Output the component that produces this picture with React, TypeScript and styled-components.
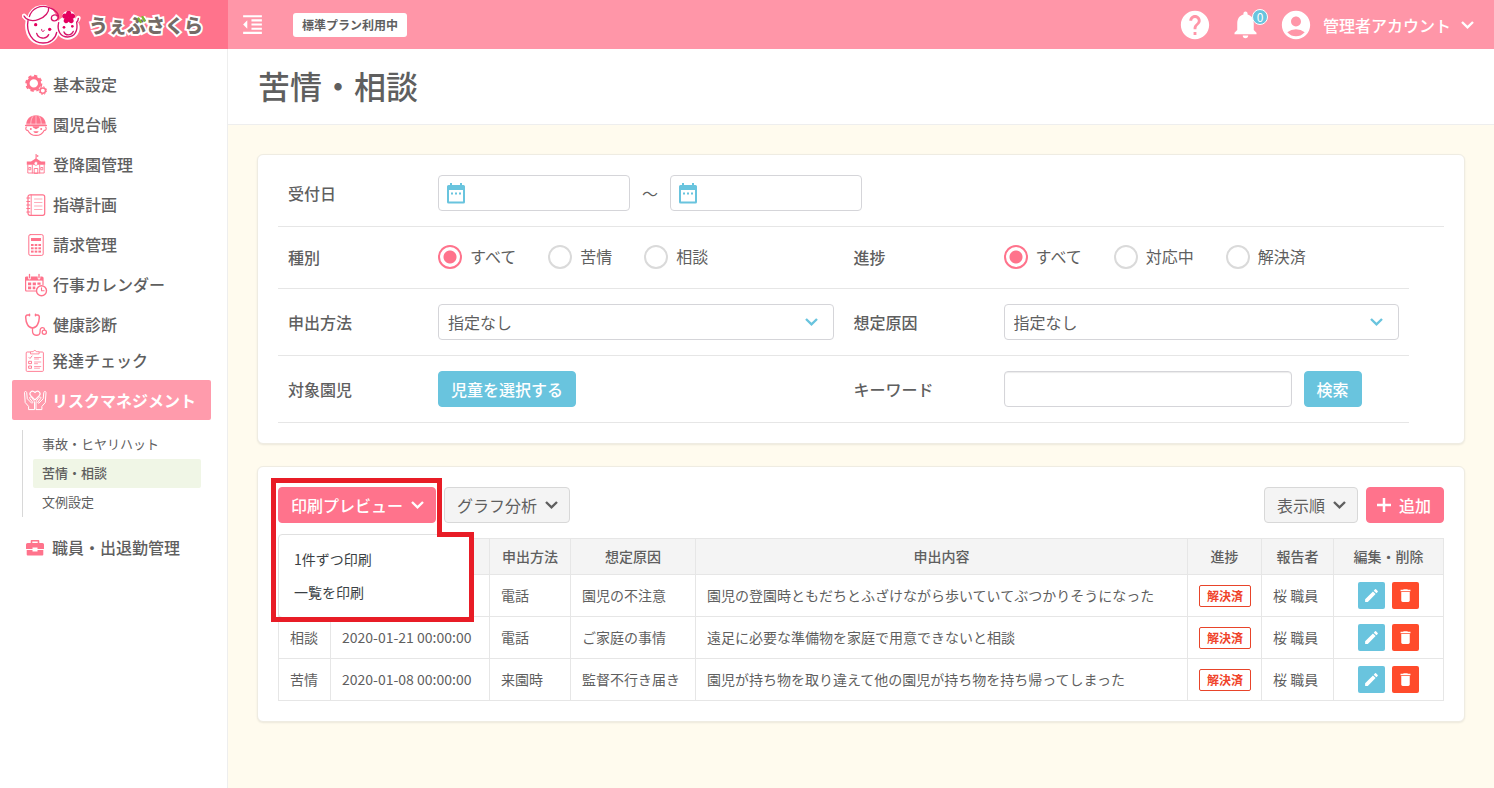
import React from "react";
import styled, { createGlobalStyle, css } from "styled-components";
import {
  MdAccountCircle,
  MdCreate,
  MdDelete,
  MdFormatIndentDecrease,
  MdHelp,
  MdNotifications,
} from "react-icons/md";

const color = {
  pink: "#ff738c",
  pinkLight: "#ff96a8",
  pinkActive: "#ff9bac",
  blue: "#69c4de",
  red: "#ff4b2b",
  text: "#5f5f5f",
  line: "#e6e6e6",
  field: "#d5d5d9",
  cream: "#fffbee",
  gray: "#f4f4f4",
};

const GlobalStyle = createGlobalStyle`
  *, *::before, *::after { box-sizing: border-box; }
  body {
    margin: 0;
    background: ${color.cream};
    color: ${color.text};
    font-family: "Noto Sans CJK JP", "Noto Sans", sans-serif;
    font-size: 16px;
    line-height: 24px;
  }
  button, input, select { font: inherit; color: inherit; margin: 0; }
  button { cursor: pointer; }
  a { color: inherit; text-decoration: none; }
  ul { list-style: none; margin: 0; padding: 0; }
  svg { display: block; flex: none; }
`;

/* ---------- page frame ---------- */

const Page = styled.div`
  display: grid;
  grid-template-columns: 228px minmax(0, 1fr);
  grid-template-rows: 49px auto;
  min-height: 100vh;
`;

const Brand = styled.a`
  display: flex;
  align-items: center;
  gap: 7px;
  padding-left: 22px;
  background: ${color.pink};
`;

const BrandName = styled.span`
  position: relative;
  color: #756b66;
  font-size: 19px;
  font-weight: 900;
  line-height: 24px;
  -webkit-text-stroke: 4px #fff;
  paint-order: stroke fill;
`;

const BrandLeaf = styled.svg`
  position: absolute;
  left: 48px;
  top: 3px;
`;

const TopBar = styled.header`
  display: flex;
  align-items: center;
  justify-content: space-between;
  padding: 0 20px 0 12px;
  background: ${color.pinkLight};
  color: #fff;
`;

const TopGroup = styled.div<{ $gap: number }>`
  display: flex;
  align-items: center;
  gap: ${(p) => p.$gap}px;
`;

const IconButton = styled.button`
  position: relative;
  display: flex;
  padding: 0;
  border: 0;
  background: none;
  color: #fff;
`;

const PlanBadge = styled.span`
  padding: 0 9px;
  border-radius: 3px;
  background: #fff;
  color: ${color.text};
  font-size: 12px;
  font-weight: 700;
  line-height: 24px;
`;

const Count = styled.span`
  position: absolute;
  top: 1px;
  right: -6px;
  width: 16px;
  height: 16px;
  border: 1px solid #fff;
  border-radius: 8px;
  background: ${color.blue};
  font-size: 12px;
  line-height: 14px;
  text-align: center;
`;

const AccountButton = styled.button`
  display: flex;
  align-items: center;
  gap: 10px;
  padding: 0;
  border: 0;
  background: none;
  color: #fff;
  font-weight: 500;
`;

/* ---------- side navigation ---------- */

const Sidebar = styled.nav`
  padding: 16px 16px 20px 12px;
  border-right: 1px solid #eeeeee;
  background: #fff;
`;

const NavLink = styled.a<{ $active?: boolean; $compact?: boolean; $tight?: boolean }>`
  display: flex;
  align-items: center;
  gap: ${(p) => (p.$tight ? 4 : 5)}px;
  height: ${(p) => (p.$compact ? 32 : 40)}px;
  margin-bottom: ${(p) => (p.$compact ? 3 : 0)}px;
  padding-left: 12px;
  border-radius: 2px;
  white-space: nowrap;
  color: ${(p) => (p.$active ? "#fff" : color.text)};
  background: ${(p) => (p.$active ? color.pinkActive : "transparent")};
  font-weight: ${(p) => (p.$active ? 700 : 500)};
  svg { color: ${(p) => (p.$active ? "#fff" : color.pink)}; }
  span { padding-bottom: ${(p) => (p.$active ? 0 : 2)}px; }
`;

const SubNav = styled.ul`
  margin: 10px 10px 11px;
  padding-left: 10px;
  border-left: 1px solid #d8d8d8;
`;

const SubLink = styled.a<{ $active?: boolean }>`
  display: block;
  padding: 0 0 2px 9px;
  border-radius: 2px;
  font-size: 13px;
  line-height: 27px;
  font-weight: ${(p) => (p.$active ? 500 : 400)};
  background: ${(p) => (p.$active ? "#f0f6e6" : "transparent")};
`;

/* ---------- content ---------- */

const Main = styled.main`
  min-width: 0;
`;

const TitleBand = styled.div`
  padding: 12px 30px 15px;
  border-bottom: 1px solid #eeeeee;
  background: #fff;
`;

const Title = styled.h1`
  margin: 0;
  font-size: 32px;
  font-weight: 500;
  line-height: 48px;
`;

const Content = styled.div`
  display: flex;
  flex-direction: column;
  gap: 22px;
  padding: 29px 29px 40px;
`;

const Card = styled.section<{ $top: number }>`
  padding: ${(p) => p.$top}px 20px 20px;
  border: 1px solid #efece2;
  border-radius: 6px;
  background: #fff;
  box-shadow: 0 1px 2px rgba(0, 0, 0, 0.08);
`;

const FilterRow = styled.div<{ $full?: boolean }>`
  display: grid;
  grid-template-columns: ${(p) => (p.$full ? "1fr" : "1fr 1fr")};
  width: ${(p) => (p.$full ? "100%" : "97%")};
  min-height: 62px;
  padding: 15px 0;
  border-bottom: 1px solid ${color.line};
`;

const Field = styled.div`
  display: grid;
  grid-template-columns: 150px minmax(0, 1fr);
  align-items: center;
  padding: 0 10px;
`;

const RadioGroup = styled(Field)`
  padding-bottom: 2px;
`;

const FieldLabel = styled.label`
  font-weight: 500;
`;

const Inline = styled.div<{ $gap: number }>`
  display: flex;
  align-items: center;
  gap: ${(p) => p.$gap}px;
`;

const box = css`
  height: 36px;
  border: 1px solid ${color.field};
  border-radius: 4px;
  background: #fff;
`;

const DateBox = styled.div`
  ${box}
  display: flex;
  align-items: center;
  gap: 6px;
  width: 192px;
  padding: 0 8px 0 7px;
`;

const DateInput = styled.input`
  flex: 1;
  min-width: 0;
  border: 0;
  outline: 0;
  background: transparent;
`;

const TextInput = styled.input`
  ${box}
  width: 288px;
  padding: 0 10px;
  box-shadow: inset 0 1px 1px rgba(0, 0, 0, 0.08);
`;

const SelectWrap = styled.div`
  position: relative;
  svg {
    position: absolute;
    right: 16px;
    top: 14px;
    color: ${color.blue};
    pointer-events: none;
  }
`;

const Select = styled.select`
  ${box}
  width: 100%;
  padding: 0 36px 0 9px;
  appearance: none;
`;

const RadioLabel = styled.label`
  display: flex;
  align-items: center;
  gap: 8px;
  span { padding-bottom: 2px; }
`;

const Radio = styled.input`
  appearance: none;
  width: 24px;
  height: 24px;
  border: 2px solid #dadada;
  border-radius: 50%;
  background: #fff;
  &:checked {
    border-color: ${color.pink};
    background: radial-gradient(circle, ${color.pink} 6px, #fff 7px);
  }
`;

const tones = {
  pink: css`
    border-color: ${color.pink};
    background: ${color.pink};
    color: #fff;
    font-weight: 500;
  `,
  blue: css`
    border-color: ${color.blue};
    background: ${color.blue};
    color: #fff;
    font-weight: 500;
  `,
  gray: css`
    border-color: #d8d8d8;
    background: ${color.gray};
  `,
};

const Button = styled.button<{ $tone: keyof typeof tones }>`
  display: flex;
  align-items: center;
  gap: 8px;
  height: 36px;
  padding: 0 12px;
  border: 1px solid;
  border-radius: 4px;
  white-space: nowrap;
  ${(p) => tones[p.$tone]}
`;

const DropButton = styled(Button)`
  padding-right: 11px;
`;

const AddButton = styled(Button)`
  padding-left: 10px;
`;

const Toolbar = styled.div`
  display: flex;
  justify-content: space-between;
  margin-bottom: 15px;
`;

const Dropdown = styled.div`
  position: relative;
`;

const Menu = styled.ul`
  position: absolute;
  z-index: 1;
  top: 47px;
  left: 0;
  width: 194px;
  padding: 8px 0;
  border: 1px solid #e0e0e0;
  border-radius: 4px;
  background: #fff;
`;

const MenuItem = styled.button`
  display: block;
  width: 100%;
  padding: 0 15px;
  border: 0;
  background: none;
  color: #3a3f44;
  font-size: 14px;
  line-height: 33px;
  text-align: left;
`;

const Outline = styled.svg`
  position: absolute;
  z-index: 2;
  left: -7px;
  top: -9px;
  pointer-events: none;
`;

const Table = styled.table`
  width: 100%;
  table-layout: fixed;
  border-collapse: collapse;
  font-size: 14px;
  line-height: 21px;
`;

const Th = styled.th<{ $width?: number }>`
  width: ${(p) => (p.$width ? p.$width + "px" : "auto")};
  height: 36px;
  padding: 0;
  border: 1px solid ${color.line};
  background: ${color.gray};
  font-weight: 500;
`;

const Td = styled.td`
  height: 42px;
  padding: 0 0 0 11px;
  border: 1px solid ${color.line};
  white-space: nowrap;
`;

const ActionTd = styled(Td)`
  padding: 0;
`;

const Actions = styled.div`
  display: flex;
  justify-content: center;
  gap: 7px;
`;

const Action = styled.button<{ $color: string }>`
  display: flex;
  align-items: center;
  justify-content: center;
  width: 27px;
  height: 27px;
  padding: 0;
  border: 0;
  border-radius: 2px;
  background: ${(p) => p.$color};
  color: #fff;
`;

const Status = styled.span`
  display: block;
  width: 52px;
  border: 1px solid #e8442a;
  border-radius: 2px;
  color: #f0432a;
  font-size: 12px;
  font-weight: 700;
  line-height: 20px;
  text-align: center;
`;

/* ---------- drawings ---------- */

const Chevron = () => (
  <svg width="13" height="8" viewBox="0 0 13 8" fill="none" stroke="currentColor" strokeWidth="2.400" aria-hidden>
    <path d="M1 1l5.500 5.300L12 1" />
  </svg>
);

const Plus = () => (
  <svg width="14" height="14" viewBox="0 0 14 14" stroke="currentColor" strokeWidth="2.500" aria-hidden>
    <path d="M7 0v14M0 7h14" />
  </svg>
);

const CalendarIcon = () => (
  <svg width="20" height="22" viewBox="0 -1 20 22" fill={color.blue} aria-hidden>
    <path d="M4 0h2v2h8V0h2v2h1.500a1.500 1.500 0 0 1 1.500 1.500V19a1.500 1.500 0 0 1-1.500 1.500h-15A1.500 1.500 0 0 1 1 19V3.500A1.500 1.500 0 0 1 2.500 2H4zM3 7v11.500h14V7z" />
    <path d="M5 9.500h2v2H5zM9 9.500h2v2H9zM13 9.500h2v2h-2z" />
  </svg>
);

const LogoMark = () => (
  <svg width="60" height="44" viewBox="18 7 180 132" fill="none" aria-hidden>
    <g stroke="#fff" strokeWidth="14" strokeLinejoin="round" strokeLinecap="round" fill="#fff">
      <path d="M36 58C28 98 48 127 80 127c24 0 40-16 42-34 1-22-4-44-16-60C96 14 52 12 40 52z" />
      <ellipse cx="155" cy="82" rx="29" ry="28" />
      <path d="M24 46c8 10 20 14 34 12M174 62c8-1 12-5 13-10" fill="none" />
      <circle cx="158" cy="50" r="13" />
    </g>
    <g stroke="#d8146a" strokeWidth="4" strokeLinecap="round" strokeLinejoin="round">
      <path d="M24 46c6 12 24 18 44 10 20-7 32-22 30-36" />
      <path d="M40 48C48 22 74 12 98 20c20 6 34 22 28 34-5 10-20 8-20-2 0-9 12-12 19-6" />
      <path d="M36 60c-6 34 12 67 45 67 22 0 38-14 41-32" />
      <path d="M128 66c-6 24 6 43 27 43 20 0 32-18 27-44 3-3 5-7 5-12" />
      <path d="M62 98c4 16 28 20 36 4" />
      <path d="M144 94c4 12 22 12 28-2" />
      <path d="M77 86c-2 7 6 9 8 3" strokeWidth="3" />
    </g>
    <g fill="#e4005f">
      <circle cx="59" cy="72" r="5" />
      <circle cx="101" cy="86" r="5" />
      <circle cx="144" cy="80" r="4" />
      <circle cx="169" cy="77" r="4" />
      {[0, 72, 144, 216, 288].map((a) => (
        <ellipse key={a} cx="158" cy="40" rx="8" ry="10" transform={`rotate(${a} 158 50)`} />
      ))}
    </g>
  </svg>
);

const NavIcon = ({ children }: { children: React.ReactNode }) => (
  <svg
    width="24"
    height="24"
    viewBox="0 0 24 24"
    fill="none"
    stroke="currentColor"
    strokeLinecap="round"
    strokeLinejoin="round"
    aria-hidden
  >
    {children}
  </svg>
);

const icons = {
  gears: (
    <NavIcon>
      <circle cx="9.800" cy="10.400" r="5.700" strokeWidth="3" />
      <circle cx="9.800" cy="10.400" r="7.600" strokeWidth="1.900" strokeLinecap="butt" strokeDasharray="3.300 2.670" />
      <circle cx="18.800" cy="17.600" r="2.700" strokeWidth="1.500" />
      <circle cx="18.800" cy="17.600" r="3.800" strokeWidth="1" strokeLinecap="butt" strokeDasharray="1.600 1.380" />
    </NavIcon>
  ),
  child: (
    <NavIcon>
      <path d="M2.200 11.800C2.200 6 6.300 2.300 12 2.300s9.800 3.700 9.800 9.500z" fill="currentColor" stroke="none" />
      <path d="M8.800 3.500C7.300 5.500 6.800 8 6.800 11M15.200 3.500c1.500 2 2 4.500 2 7.500M12 3v8" stroke="#fff" strokeWidth=".5" />
      <path d="M2.500 11.100h19" stroke="#fff" strokeWidth=".5" />
      <path d="M1.600 12.500h20.800" strokeWidth="1.300" />
      <path d="M2.300 14.200c-1.200 1.400-.2 3.400 1.600 3.200 1.600 3.400 4.600 5 8.100 5s6.500-1.600 8.100-5c1.800.2 2.800-1.800 1.600-3.200" strokeWidth="1.100" />
      <path d="M8.500 13.200h7c-.2 1.700-1.800 2-3.500 3-1.700-1-3.300-1.300-3.500-3z" fill="currentColor" stroke="none" />
      <circle cx="6.800" cy="16" r="1" fill="currentColor" stroke="none" />
      <circle cx="17.200" cy="16" r="1" fill="currentColor" stroke="none" />
      <path d="M9.300 18.200c1 2.500 4.400 2.500 5.400 0z" fill="currentColor" stroke="none" />
    </NavIcon>
  ),
  school: (
    <NavIcon>
      <path d="M12 1.500v5M12.300 2l2 1-2 1" strokeWidth=".9" />
      <path d="M12 5.200l5 3.300h4.200v3.200H2.800V8.500H7z" fill="currentColor" stroke="none" />
      <circle cx="12" cy="10.500" r="1.900" fill="#fff" strokeWidth=".7" />
      <path d="M3.800 12v8h16.400v-8M8.300 12v8M15.700 12v8" strokeWidth=".9" />
      <path d="M5.200 14.500h1.600v2.300H5.200zM17.200 14.500h1.600v2.300h-1.600zM10.200 20v-4.500h3.600V20z" strokeWidth=".9" />
    </NavIcon>
  ),
  notebook: (
    <NavIcon>
      <rect x="4" y="1.800" width="16.700" height="20.500" rx="2" strokeWidth="1.200" />
      <path d="M7.200 2v20" strokeWidth=".9" />
      <path d="M2.800 5h3M2.800 8.500h3M2.800 12h3M2.800 15.500h3M2.800 19h3" strokeWidth="1.100" />
      <path d="M10.500 6h7.500M10.500 9.500h7.500M10.500 13h7.500M10.500 16.500h7.500" strokeWidth=".6" />
    </NavIcon>
  ),
  calculator: (
    <NavIcon>
      <rect x="4.800" y="1.600" width="14.400" height="20.800" rx="1.500" strokeWidth="1" />
      <path d="M7 5h10v3H7z" fill="currentColor" stroke="none" />
      {[11, 14.300, 17.600].map((y) =>
        [7, 10.700, 14.400].map((x) => (
          <rect key={`${x}-${y}`} x={x} y={y} width="2.600" height="2" fill="currentColor" stroke="none" />
        )),
      )}
    </NavIcon>
  ),
  calendar: (
    <NavIcon>
      <path d="M11.500 18H2.600a1 1 0 0 1-1-1V5a1 1 0 0 1 1-1H18a1 1 0 0 1 1 1v6.500" strokeWidth="1.200" />
      <path d="M1.600 4H19v3.600H1.600z" fill="currentColor" stroke="none" />
      <path d="M5.500 1.300v4M15 1.300v4" stroke="#fff" strokeWidth="2.600" />
      <path d="M5.500 1.300v3.500M15 1.300v3.500" strokeWidth="1.300" />
      <path d="M4 9.500h3.200v2.700H4zM8.700 9.500h3.200v2.700H8.700zM13.400 9.500h3.200v2.200h-3.200zM4 13.600h3.200v2.700H4zM8.700 13.600h2.600v2.700H8.700z" fill="currentColor" stroke="none" />
      <circle cx="17.500" cy="17.700" r="5" strokeWidth="1.400" fill="#fff" />
      <path d="M17.500 14.800v3h2.600" strokeWidth="1.100" />
    </NavIcon>
  ),
  stethoscope: (
    <NavIcon>
      <path d="M5.300 2H3.500C2 2 1.600 3.200 1.700 4.500c.2 5 2.300 10.500 6.800 10.500s6.600-5.500 6.800-10.500C15.400 3.200 15 2 13.500 2h-1.800" strokeWidth="1.500" />
      <path d="M5.500 1.300v1.500M11.500 1.300v1.500" strokeWidth="1.500" />
      <path d="M8.500 15v3c0 5.400 7 5.400 7.500 1.500.3-2.500-.5-4.500 2-4.900 1.600-.2 2.500.8 2.500 2" strokeWidth="1.300" />
      <circle cx="20.300" cy="19.300" r="2.100" strokeWidth="1.300" />
    </NavIcon>
  ),
  clipboard: (
    <NavIcon>
      <path d="M6 3H3.200a1 1 0 0 0-1 1v17.400a1 1 0 0 0 1 1h15.200a1 1 0 0 0 1-1V4a1 1 0 0 0-1-1h-2.800" strokeWidth=".9" />
      <path d="M6.500 4.500V2.700h2.700c.5-1.700 2.700-1.700 3.200 0h2.700v1.800z" strokeWidth=".8" />
      <path d="M5 8.500l1 1 2-2.500" strokeWidth=".9" />
      <path d="M5 12.300h2.500v2.300H5zM5 17h2.500v2.300H5z" strokeWidth=".9" />
      <path d="M10.500 8.500h6.300M10.500 10h4M10.500 13h6.300M10.500 14.700h3M10.500 17.500h6.300M10.500 19.200h5" strokeWidth=".7" />
    </NavIcon>
  ),
  hands: (
    <NavIcon>
      <path d="M11 11.800L6.500 7.300C4.700 5 7.800 1.200 11 4.500c3.200-3.300 6.300.5 4.500 2.800z" strokeWidth="1.100" />
      <path d="M4.600 21.200v-2.800L1.200 14.500.5 4.600c0-1.500 2-1.500 2.200 0l.6 6.200 4.300 4.300c.5.500 1.500-.4 1-1L5.800 10.500C5 9.300 6.500 8.300 7.500 9.300l2.300 3.200c.5.800.7 1.500.7 2.500v6.200z" strokeWidth="1" />
      <path d="M17.900 21.200v-2.800l3.400-3.900.7-9.900c0-1.500-2-1.500-2.200 0l-.6 6.200-4.300 4.300c-.5.500-1.500-.4-1-1l2.800-3.600c.8-1.200-.7-2.200-1.700-1.200l-2.300 3.200c-.5.800-.7 1.500-.7 2.500v6.200z" strokeWidth="1" />
    </NavIcon>
  ),
  briefcase: (
    <NavIcon>
      <path d="M7.500 7V4.800h7V7" strokeWidth="1.600" />
      <path d="M3.500 7h15A1.500 1.500 0 0 1 20 8.500V13h-6.500v-1.500h-5V13H2V8.500A1.500 1.500 0 0 1 3.500 7zM2.700 14h5.800v1.500h5V14h5.800v4.500a1 1 0 0 1-1 1H3.700a1 1 0 0 1-1-1z" fill="currentColor" stroke="none" />
    </NavIcon>
  ),
};

/* ---------- data ---------- */

type NavItem = {
  icon: keyof typeof icons;
  label: string;
  compact?: boolean;
  tight?: boolean;
  active?: boolean;
  children?: string[];
};

const navItems: NavItem[] = [
  { icon: "gears", label: "基本設定" },
  { icon: "child", label: "園児台帳" },
  { icon: "school", label: "登降園管理" },
  { icon: "notebook", label: "指導計画" },
  { icon: "calculator", label: "請求管理" },
  { icon: "calendar", label: "行事カレンダー" },
  { icon: "stethoscope", label: "健康診断" },
  { icon: "clipboard", label: "発達チェック", compact: true, tight: true },
  {
    icon: "hands",
    label: "リスクマネジメント",
    tight: true,
    active: true,
    children: ["事故・ヒヤリハット", "苦情・相談", "文例設定"],
  },
  { icon: "briefcase", label: "職員・出退勤管理", tight: true },
];

const currentPage = "苦情・相談";

const columns: { label: string; width?: number }[] = [
  { label: "", width: 52 },
  { label: "", width: 159 },
  { label: "申出方法", width: 81 },
  { label: "想定原因", width: 125 },
  { label: "申出内容" },
  { label: "進捗", width: 74 },
  { label: "報告者", width: 72 },
  { label: "編集・削除", width: 110 },
];

const records = [
  ["", "", "電話", "園児の不注意", "園児の登園時ともだちとふざけながら歩いていてぶつかりそうになった"],
  ["相談", "2020-01-21 00:00:00", "電話", "ご家庭の事情", "遠足に必要な準備物を家庭で用意できないと相談"],
  ["苦情", "2020-01-08 00:00:00", "来園時", "監督不行き届き", "園児が持ち物を取り違えて他の園児が持ち物を持ち帰ってしまった"],
];

/* ---------- parts ---------- */

const RadioField = ({ name, label, options }: { name: string; label: string; options: string[] }) => (
  <RadioGroup role="radiogroup" aria-labelledby={`${name}-label`}>
    <FieldLabel as="span" id={`${name}-label`}>{label}</FieldLabel>
    <Inline $gap={32}>
      {options.map((option, i) => (
        <RadioLabel key={option}>
          <Radio type="radio" name={name} defaultChecked={i === 0} />
          <span>{option}</span>
        </RadioLabel>
      ))}
    </Inline>
  </RadioGroup>
);

const SelectField = ({ id, label }: { id: string; label: string }) => (
  <Field>
    <FieldLabel htmlFor={id}>{label}</FieldLabel>
    <SelectWrap>
      <Select id={id}>
        <option>指定なし</option>
      </Select>
      <Chevron />
    </SelectWrap>
  </Field>
);

export default function App() {
  return (
    <>
      <GlobalStyle />
      <Page>
        <Brand href="#">
          <LogoMark />
          <BrandName>
            うぇぶさくら
            <BrandLeaf width="10" height="8" viewBox="0 0 10 8" aria-hidden>
              <path d="M1.500 2.500l2 3.500M5.500 1l2 3.500" stroke="#7fb62e" strokeWidth="2.400" strokeLinecap="round" />
            </BrandLeaf>
          </BrandName>
        </Brand>

        <TopBar>
          <TopGroup $gap={28}>
            <IconButton aria-label="メニューを閉じる">
              <MdFormatIndentDecrease size={25} />
            </IconButton>
            <PlanBadge>標準プラン利用中</PlanBadge>
          </TopGroup>
          <TopGroup $gap={17}>
            <IconButton aria-label="ヘルプ">
              <MdHelp size={34} />
            </IconButton>
            <IconButton aria-label="お知らせ">
              <MdNotifications size={33} />
              <Count>0</Count>
            </IconButton>
            <AccountButton>
              <MdAccountCircle size={34} />
              <span>管理者アカウント</span>
              <Chevron />
            </AccountButton>
          </TopGroup>
        </TopBar>

        <Sidebar>
          <ul>
            {navItems.map((item) => (
              <li key={item.label}>
                <NavLink href="#" $active={item.active} $compact={item.compact} $tight={item.tight}>
                  {icons[item.icon]}
                  <span>{item.label}</span>
                </NavLink>
                {item.children && (
                  <SubNav>
                    {item.children.map((child) => (
                      <li key={child}>
                        <SubLink href="#" $active={child === currentPage}>{child}</SubLink>
                      </li>
                    ))}
                  </SubNav>
                )}
              </li>
            ))}
          </ul>
        </Sidebar>

        <Main>
          <TitleBand>
            <Title>{currentPage}</Title>
          </TitleBand>
          <Content>
            <Card as="form" $top={5}>
              <FilterRow $full>
                <Field>
                  <FieldLabel htmlFor="date-from">受付日</FieldLabel>
                  <Inline $gap={12}>
                    <DateBox>
                      <CalendarIcon />
                      <DateInput id="date-from" type="text" />
                    </DateBox>
                    <span>～</span>
                    <DateBox>
                      <CalendarIcon />
                      <DateInput type="text" aria-label="受付日（終了）" />
                    </DateBox>
                  </Inline>
                </Field>
              </FilterRow>
              <FilterRow>
                <RadioField name="kind" label="種別" options={["すべて", "苦情", "相談"]} />
                <RadioField name="progress" label="進捗" options={["すべて", "対応中", "解決済"]} />
              </FilterRow>
              <FilterRow>
                <SelectField id="method" label="申出方法" />
                <SelectField id="cause" label="想定原因" />
              </FilterRow>
              <FilterRow>
                <Field>
                  <FieldLabel htmlFor="child">対象園児</FieldLabel>
                  <Inline $gap={12}>
                    <Button id="child" type="button" $tone="blue">児童を選択する</Button>
                  </Inline>
                </Field>
                <Field>
                  <FieldLabel htmlFor="keyword">キーワード</FieldLabel>
                  <Inline $gap={12}>
                    <TextInput id="keyword" type="text" />
                    <Button type="button" $tone="blue">検索</Button>
                  </Inline>
                </Field>
              </FilterRow>
            </Card>

            <Card $top={20}>
              <Toolbar>
                <Inline $gap={8}>
                  <Dropdown>
                    <DropButton $tone="pink" aria-expanded="true">
                      印刷プレビュー
                      <Chevron />
                    </DropButton>
                    <Menu>
                      <li><MenuItem>1件ずつ印刷</MenuItem></li>
                      <li><MenuItem>一覧を印刷</MenuItem></li>
                    </Menu>
                    <Outline width="204" height="145" viewBox="0 0 204 145" aria-hidden>
                      <path
                        d="M2.500 2.500H168.500V56.500H200.500V141.500H2.500Z"
                        fill="none"
                        stroke="#e81c26"
                        strokeWidth="5"
                      />
                    </Outline>
                  </Dropdown>
                  <DropButton $tone="gray">
                    グラフ分析
                    <Chevron />
                  </DropButton>
                </Inline>
                <Inline $gap={8}>
                  <DropButton $tone="gray">
                    表示順
                    <Chevron />
                  </DropButton>
                  <AddButton $tone="pink">
                    <Plus />
                    追加
                  </AddButton>
                </Inline>
              </Toolbar>
              <Table>
                <thead>
                  <tr>
                    {columns.map(({ label, width }, i) => (
                      <Th key={i} scope="col" $width={width}>{label}</Th>
                    ))}
                  </tr>
                </thead>
                <tbody>
                  {records.map((record) => (
                    <tr key={record[4]}>
                      {record.map((value, i) => (
                        <Td key={i}>{value}</Td>
                      ))}
                      <Td><Status>解決済</Status></Td>
                      <Td>桜 職員</Td>
                      <ActionTd>
                        <Actions>
                          <Action $color={color.blue} aria-label="編集"><MdCreate size={17} /></Action>
                          <Action $color={color.red} aria-label="削除"><MdDelete size={17} /></Action>
                        </Actions>
                      </ActionTd>
                    </tr>
                  ))}
                </tbody>
              </Table>
            </Card>
          </Content>
        </Main>
      </Page>
    </>
  );
}
